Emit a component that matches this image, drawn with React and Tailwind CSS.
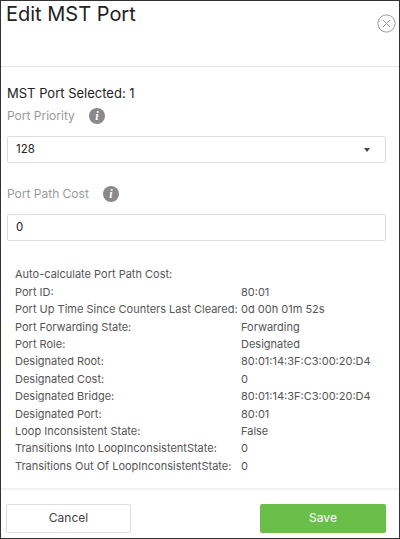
export default function App() {
  const rows = [
    ["Auto-calculate Port Path Cost:", ""],
    ["Port ID:", "80:01"],
    ["Port Up Time Since Counters Last Cleared:", "0d 00h 01m 52s"],
    ["Port Forwarding State:", "Forwarding"],
    ["Port Role:", "Designated"],
    ["Designated Root:", "80:01:14:3F:C3:00:20:D4"],
    ["Designated Cost:", "0"],
    ["Designated Bridge:", "80:01:14:3F:C3:00:20:D4"],
    ["Designated Port:", "80:01"],
    ["Loop Inconsistent State:", "False"],
    ["Transitions Into LoopInconsistentState:", "0"],
    ["Transitions Out Of LoopInconsistentState:", "0"],
  ];
  const Info = () => (
    <span className="w-[16px] h-[16px] rounded-full bg-[#8a8a8a] text-white text-[12px] italic font-bold flex items-center justify-center ml-[14px]" style={{ fontFamily: "Liberation Serif, serif" }}>i</span>
  );
  return (
    <div className="w-[400px] h-[539px] border border-[#333] bg-white flex flex-col text-[#222] overflow-hidden" style={{ fontFamily: "Inter, 'Noto Sans', sans-serif" }}>
      <div className="h-[66px] flex justify-between border-b border-[#e5e5e5] shrink-0">
        <div className="text-[20px] leading-[28px] pl-[5px] -mt-[1px]">Edit MST Port</div>
        <div className="mt-[13px] mr-[3px]">
          <svg width="19" height="19" viewBox="0 0 19 19" fill="none" stroke="#999" strokeWidth="1">
            <circle cx="9.5" cy="9.5" r="8.6" />
            <path d="M6 6 L13 13 M13 6 L6 13" />
          </svg>
        </div>
      </div>
      <div className="flex-1 pl-[6px] pr-[13px] pt-[17px]">
        <div className="text-[13px] leading-[18px] text-[#222]">MST Port Selected: 1</div>
        <div className="flex items-center mt-[6px] h-[16px] text-[12px] text-[#9a9a9a]">Port Priority<Info /></div>
        <div className="mt-[12px] h-[27px] border border-[#ddd] rounded-[2px] flex items-center justify-between px-[8px] text-[11.5px]">
          <span>128</span>
          <span className="w-0 h-0 border-l-[3.5px] border-r-[3.5px] border-t-[4px] border-l-transparent border-r-transparent border-t-[#444] mr-[7px]"></span>
        </div>
        <div className="flex items-center mt-[23px] h-[16px] text-[12px] text-[#9a9a9a]">Port Path Cost<Info /></div>
        <div className="mt-[12px] h-[27px] border border-[#ddd] rounded-[2px] flex items-center px-[8px] text-[11.5px]">0</div>
        <div className="mt-[25px] pl-[8px] text-[11px] text-[#555]">
          {rows.map(([k, v]) => (
            <div key={k} className="flex h-[17.4px] items-center">
              <span className="w-[226px]">{k}</span>
              <span>{v}</span>
            </div>
          ))}
        </div>
      </div>
      <div className="h-[50px] border-t-[2px] border-[#f2f2f2] flex items-center justify-between pl-[5px] pr-[13px] shrink-0 pt-[8px]">
        <button className="w-[125px] h-[29px] border border-[#ddd] text-[12px] text-[#444] rounded-[2px]">Cancel</button>
        <button className="w-[126px] h-[29px] bg-[#6abf4b] text-[12px] text-white rounded-[2px]">Save</button>
      </div>
    </div>
  );
}
